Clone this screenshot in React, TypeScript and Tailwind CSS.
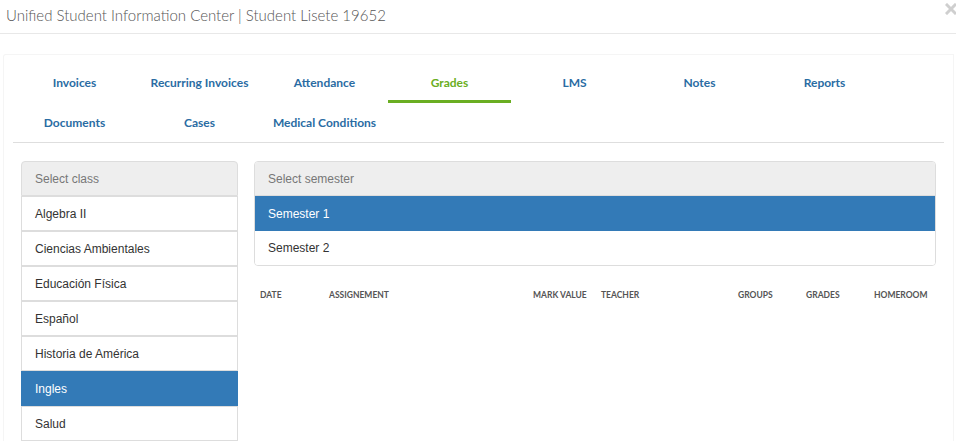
import React from "react";

const tabsRow1 = ["Invoices", "Recurring Invoices", "Attendance", "Grades", "LMS", "Notes", "Reports"];
const tabsRow2 = ["Documents", "Cases", "Medical Conditions"];
const classes = ["Algebra II", "Ciencias Ambientales", "Educación Física", "Español", "Historia de América", "Ingles", "Salud"];
const cols: [string, string][] = [
  ["DATE", "w-[69px]"],
  ["ASSIGNEMENT", "w-[204px]"],
  ["MARK VALUE", "w-[68px]"],
  ["TEACHER", "w-[137px]"],
  ["GROUPS", "w-[68px]"],
  ["GRADES", "w-[68px]"],
  ["HOMEROOM", "w-[62px]"],
];

function Tab({ label, active }: { label: string; active?: boolean }) {
  return (
    <div className="w-[125px] h-[40px] pr-[2px]">
      <div
        className={
          "h-full flex items-center justify-center text-[12px] font-bold " +
          (active ? "text-[#6aae22] border-b-[3px] border-[#6aae22] pt-[3px]" : "text-[#2a6ca3]")
        }
      >
        {label}
      </div>
    </div>
  );
}

export default function App() {
  return (
    <div className="w-[956px] h-[442px] bg-white overflow-hidden relative" style={{ fontFamily: "Lato, 'Liberation Sans', sans-serif" }}>
      <div className="h-[34px] border-b border-[#e8e8e8] flex items-center pl-[6px] pb-[2px]">
        <span className="text-[15px] font-light text-[#555] leading-none">Unified Student Information Center | Student Lisete 19652</span>
      </div>
      <svg className="absolute right-[-1px] top-[3px]" width="12" height="12" viewBox="0 0 12 12">
        <path d="M2 2 L10 10 M10 2 L2 10" stroke="#cfcfcf" strokeWidth="3" strokeLinecap="square" />
      </svg>
      <div className="ml-[3px] w-[951px] mt-[20px] border-l border-t border-r border-[#f5f5f5] rounded-tl-[3px] px-[9px] pt-[8px]">
        <div className="flex">
          {tabsRow1.map((t) => (
            <Tab key={t} label={t} active={t === "Grades"} />
          ))}
        </div>
        <div className="flex border-b border-[#dedede] h-[40px]">
          {tabsRow2.map((t) => (
            <Tab key={t} label={t} />
          ))}
        </div>
        <div className="flex px-[8px] pt-[18px] gap-[16px]" style={{ fontFamily: "'Liberation Sans', Arial, sans-serif" }}>
          <div className="w-[217px] flex flex-col text-[12px]">
            <div className="h-[35px] flex items-center px-[13px] bg-[#eeeeee] text-[#777] border border-[#dddddd] rounded-t-[4px]">
              Select class
            </div>
            {classes.map((c) =>
              c === "Ingles" ? (
                <div key={c} className="h-[35px] flex items-center px-[14px] bg-[#337ab7] text-white">
                  {c}
                </div>
              ) : (
                <div key={c} className="h-[35px] flex items-center px-[13px] bg-white text-[#333] border border-[#dddddd]">
                  {c}
                </div>
              )
            )}
          </div>
          <div className="flex-1 flex flex-col">
            <div className="flex flex-col text-[12px] border border-[#dddddd] rounded-[4px] overflow-hidden">
              <div className="h-[34px] flex items-center px-[13px] bg-[#eeeeee] text-[#777] border-b border-[#dddddd]">
                Select semester
              </div>
              <div className="h-[35px] flex items-center px-[13px] bg-[#337ab7] text-white">Semester 1</div>
              <div className="h-[34px] flex items-center px-[13px] bg-white text-[#333]">Semester 2</div>
            </div>
            <div
              className="flex mt-[22px] pl-[6px] text-[8.5px] font-bold text-[#555] h-[14px] items-center"
              style={{ fontFamily: "Lato, 'Liberation Sans', sans-serif" }}
            >
              {cols.map(([c, w]) => (
                <div key={c} className={w}>
                  {c}
                </div>
              ))}
            </div>
          </div>
        </div>
      </div>
    </div>
  );
}
